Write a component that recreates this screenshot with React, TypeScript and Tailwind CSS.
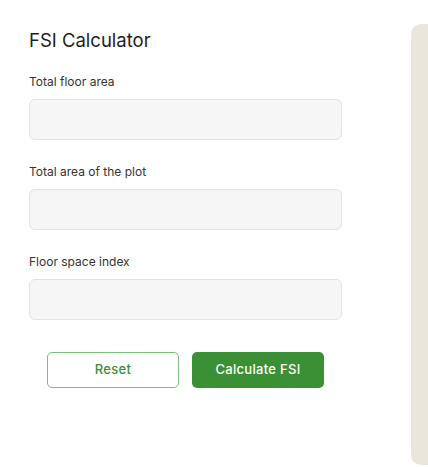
const fields = ["Total floor area", "Total area of the plot", "Floor space index"];

export default function App() {
  return (
    <div className="flex h-[467px] w-[428px] bg-white font-['Inter',sans-serif] text-[#222]">
      <div className="flex-1 pl-[29px] pr-[69px] pt-[30px]">
        <h1 className="text-[18.5px] leading-[20px] text-[#1d1d1d]">FSI Calculator</h1>
        <div className="mt-[25px] flex flex-col gap-[25px]">
          {fields.map((label) => (
            <div key={label}>
              <label className="block text-[12px] leading-[14px] text-[#333]">{label}</label>
              <input
                className="mt-[10px] block h-[41px] w-[313px] rounded-[6px] border border-[#e3e3e3] bg-[#f6f6f6] outline-none"
              />
            </div>
          ))}
        </div>
        <div className="mt-[32px] flex gap-[13px] pl-[18px]">
          <button className="h-[36px] w-[132px] rounded-[5px] border border-[#7cbf78] bg-white text-[13px] font-medium tracking-[0.3px] text-[#3a8f35]">
            Reset
          </button>
          <button className="h-[36px] w-[132px] rounded-[5px] bg-[#3b9035] text-[13px] font-medium tracking-[0.3px] text-white">
            Calculate FSI
          </button>
        </div>
      </div>
      <div className="mt-[24px] mb-[2px] w-[17px] rounded-l-[10px] bg-[#ebe6dc]" />
    </div>
  );
}
